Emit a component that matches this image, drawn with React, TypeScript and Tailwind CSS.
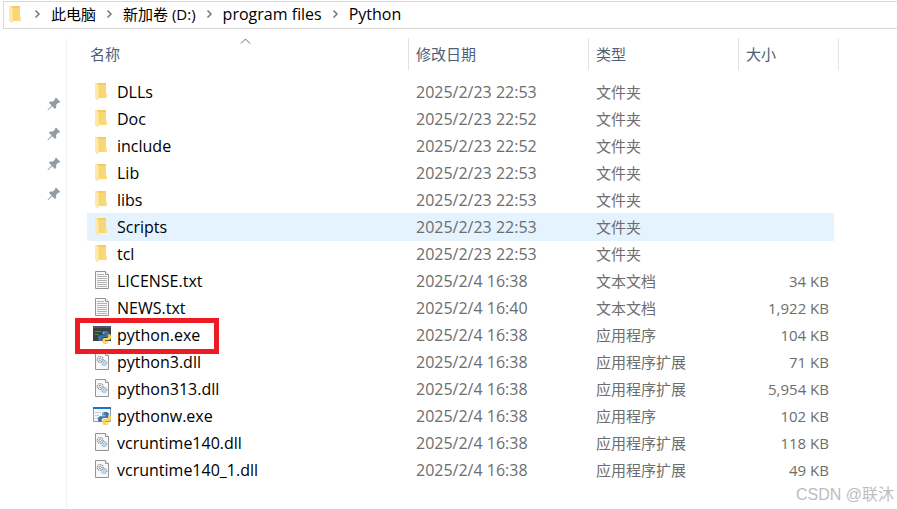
import React from "react";

type Kind = "folder" | "text" | "console" | "library" | "windowed";

interface FileRow {
  name: string;
  date: string;
  type: string;
  size: string;
  kind: Kind;
  selected?: boolean;
  framed?: boolean;
}

const rows: FileRow[] = [
  { name: "DLLs", date: "2025/2/23 22:53", type: "文件夹", size: "", kind: "folder" },
  { name: "Doc", date: "2025/2/23 22:52", type: "文件夹", size: "", kind: "folder" },
  { name: "include", date: "2025/2/23 22:52", type: "文件夹", size: "", kind: "folder" },
  { name: "Lib", date: "2025/2/23 22:53", type: "文件夹", size: "", kind: "folder" },
  { name: "libs", date: "2025/2/23 22:53", type: "文件夹", size: "", kind: "folder" },
  { name: "Scripts", date: "2025/2/23 22:53", type: "文件夹", size: "", kind: "folder", selected: true },
  { name: "tcl", date: "2025/2/23 22:53", type: "文件夹", size: "", kind: "folder" },
  { name: "LICENSE.txt", date: "2025/2/4 16:38", type: "文本文档", size: "34 KB", kind: "text" },
  { name: "NEWS.txt", date: "2025/2/4 16:40", type: "文本文档", size: "1,922 KB", kind: "text" },
  { name: "python.exe", date: "2025/2/4 16:38", type: "应用程序", size: "104 KB", kind: "console", framed: true },
  { name: "python3.dll", date: "2025/2/4 16:38", type: "应用程序扩展", size: "71 KB", kind: "library" },
  { name: "python313.dll", date: "2025/2/4 16:38", type: "应用程序扩展", size: "5,954 KB", kind: "library" },
  { name: "pythonw.exe", date: "2025/2/4 16:38", type: "应用程序", size: "102 KB", kind: "windowed" },
  { name: "vcruntime140.dll", date: "2025/2/4 16:38", type: "应用程序扩展", size: "118 KB", kind: "library" },
  { name: "vcruntime140_1.dll", date: "2025/2/4 16:38", type: "应用程序扩展", size: "49 KB", kind: "library" },
];

const path = [
  { label: "此电脑", text: "text-[15px]" },
  { label: "新加卷 (D:)", text: "text-[15px]" },
  { label: "program files", text: "text-base" },
  { label: "Python", text: "text-base" },
];

function FolderShape() {
  return (
    <>
      <path d="M3 1h9v11l1 1v3H4z" fill="#f8d775" />
      <path d="M3 1h9v2H3z" fill="#f3cc64" />
      <path d="M11 12h2v4h-2z" fill="#fbe08a" />
      <path d="M1 1h2l2 3v12l-2 2-2-2z" fill="#ffe9a6" />
      <path d="M5 4v12l-2 2" fill="none" stroke="#f6d57d" strokeWidth=".8" />
    </>
  );
}

function PageShape() {
  return (
    <>
      <path d="M1.5 1.5h10l3 3v14h-13z" fill="#f7f7f7" stroke="#949494" />
      <path d="M11.5 1.5v3h3" fill="#fff" stroke="#949494" />
    </>
  );
}

function PythonMark() {
  return (
    <g transform="translate(-1.6 -2) scale(1.15 1.1)">
      <path
        d="M12.8 7.3c-2.4 0-2.5 1-2.5 1.8v1.3h2.9v.7H8.7c-1.4 0-2.1 1-2.1 2.6s.7 2.7 1.9 2.7h1.2v-1.7c0-1.2 1-1.9 2-1.9h2.7c1 0 1.6-.7 1.6-1.6V9.1c0-1.2-1-1.8-3.2-1.8z"
        fill="#3a76ad"
      />
      <path
        d="M13.1 19.2c2.4 0 2.5-1 2.5-1.8v-1.3h-2.9v-.7h3.2c1.400 0 2.100-1 2.100-2.600s-.7-2.700-1.900-2.700h-.5v1.700c0 1.200-1 1.900-2 1.900h-1.500c-1 0-1.600.7-1.600 1.600v2.100c0 1.200 1 1.800 2.600 1.800z"
        fill="#fdd550"
      />
      <circle cx="11.6" cy="8.9" r=".6" fill="#fff" />
      <circle cx="14.2" cy="17.6" r=".6" fill="#fff" />
    </g>
  );
}

function FileIcon({ kind }: { kind: Kind }) {
  if (kind === "folder") {
    return (
      <svg viewBox="0 0 14 19" className="ml-[7px] h-[19px] w-[14px]" aria-hidden="true">
        <FolderShape />
      </svg>
    );
  }
  if (kind === "text") {
    return (
      <svg viewBox="0 1 16 20" className="ml-[7px] h-5 w-4" aria-hidden="true">
        <PageShape />
        <path
          d="M3 4.5h7M3 6.5h10M3 8.5h10M3 10.5h10M3 12.5h10M3 14.5h10M3 16.5h10"
          stroke="#b4b4b4"
          fill="none"
        />
      </svg>
    );
  }
  if (kind === "library") {
    return (
      <svg viewBox="0 1 16 20" className="ml-[7px] h-5 w-4" aria-hidden="true">
        <PageShape />
        <circle cx="6.2" cy="8.5" r="2.9" fill="#fff" stroke="#8a9095" strokeWidth="1.3" strokeDasharray="1.2 .7" />
        <circle cx="6.2" cy="8.5" r="1.2" fill="#fff" stroke="#858c91" strokeWidth=".8" />
        <circle cx="10.3" cy="12" r="2.4" fill="#e9f4fb" stroke="#7fa3bc" strokeWidth="1.2" strokeDasharray="1 .6" />
        <circle cx="10.3" cy="12" r=".9" fill="#fff" stroke="#80a8c4" strokeWidth=".7" />
      </svg>
    );
  }
  if (kind === "console") {
    return (
      <svg viewBox="0 0 20 20" className="ml-[5px] size-5" aria-hidden="true">
        <path d="M1 1h18v15H1z" fill="#3b4045" />
        <path d="M1 1h18v2H1z" fill="#46586a" />
        <path d="M3 6.5h6M3 9.5h4" stroke="#3f9656" fill="none" />
        <PythonMark />
      </svg>
    );
  }
  return (
    <svg viewBox="0 0 20 20" className="ml-[5px] size-5" aria-hidden="true">
      <path d="M1.5 1.5h17v14h-17z" fill="#f3f5f7" stroke="#8e9dab" />
      <path d="M1 1h18v2H1z" fill="#1976c1" />
      <path d="M3 6.5h6M3 9.5h4M3 12.5h3" stroke="#c7ccd1" fill="none" />
      <PythonMark />
    </svg>
  );
}

function Pin() {
  return (
    <svg viewBox="0 0 14 14" className="size-[14px]" aria-hidden="true">
      <path
        d="M9 .6 13.4 5l-1.500.8-.8-.1-2 2.200.2 2.700-1.300 1.300-2.800-2.700L1.300 13.100.5 13.300l.2-.9 3.900-3.900L1.900 5.700l1.300-1.300 2.700.2L8 2.600V1.800z"
        fill="#929ca4"
      />
    </svg>
  );
}

function Separator() {
  return (
    <svg viewBox="0 0 7 10" className="mx-[10px] h-[10px] w-[7px]" aria-hidden="true">
      <path d="M1.500 1.500 5 5 1.500 8.500" fill="none" stroke="#777" strokeWidth="1.500" />
    </svg>
  );
}

const headCell = "h-8 border-r border-[#e2e2e2] p-0 text-left align-middle font-normal";
const bodyCell = "h-[27px] whitespace-nowrap p-0 align-middle";

export default function App() {
  return (
    <div className="relative flex min-h-screen flex-col overflow-hidden bg-white font-['Open_Sans','Noto_Sans_CJK_SC',sans-serif] text-[15px] leading-5 text-[#6d6d6d]">
      <nav
        aria-label="地址"
        className="mt-px ml-[3px] flex h-7 shrink-0 items-center border-y border-l border-[#d9d9d9] pb-0.5 pl-1 text-black"
      >
        <svg viewBox="0 0 14 19" className="h-[19px] w-[14px]" aria-hidden="true">
          <FolderShape />
        </svg>
        <ol className="ml-0.5 flex items-center">
          {path.map((part) => (
            <li key={part.label} className="flex items-center">
              <Separator />
              <button type="button" className={`${part.text} leading-5 whitespace-nowrap`}>
                {part.label}
              </button>
            </li>
          ))}
        </ol>
      </nav>

      <div className="mt-[9px] flex grow">
        <aside className="w-[67px] shrink-0 border-r border-[#f2f2f2] pt-[59px]">
          <ul className="flex flex-col items-end gap-4 pr-[5px]">
            {[0, 1, 2, 3].map((item) => (
              <li key={item} className="h-[14px]">
                <Pin />
              </li>
            ))}
          </ul>
        </aside>

        <main className="mr-[58px] ml-5 grow">
          <table className="w-full table-fixed border-separate border-spacing-0">
            <colgroup>
              <col />
              <col className="w-[180px]" />
              <col className="w-[150px]" />
              <col className="w-[95px]" />
              <col className="w-[5px]" />
            </colgroup>
            <thead className="text-[#4c607a]">
              <tr>
                <th className={`${headCell} relative`}>
                  <button type="button" className="block w-full pl-[3px] text-left">
                    名称
                  </button>
                  <svg
                    viewBox="0 0 11 6"
                    className="absolute top-0 left-[153px] h-[6px] w-[11px]"
                    aria-hidden="true"
                  >
                    <path d="M1 5.5 5.5 1 10 5.5" fill="none" stroke="#6b6b6b" />
                  </svg>
                </th>
                <th className={headCell}>
                  <button type="button" className="block w-full pl-[7px] text-left">
                    修改日期
                  </button>
                </th>
                <th className={headCell}>
                  <button type="button" className="block w-full pl-[7px] text-left">
                    类型
                  </button>
                </th>
                <th colSpan={2} className={headCell}>
                  <button type="button" className="block w-full pl-[7px] text-left">
                    大小
                  </button>
                </th>
              </tr>
            </thead>
            <tbody className="before:block before:h-2 before:content-['']">
              {rows.map((row) => {
                const fill = row.selected ? "bg-[#e5f3ff] shadow-[0_1px_0_#e5f3ff]" : "";
                return (
                  <tr key={row.name}>
                    <td className={`${bodyCell} ${fill} relative text-base leading-5 text-black`}>
                      <div className="flex items-center">
                        <span className="w-[30px] shrink-0">
                          <FileIcon kind={row.kind} />
                        </span>
                        <span>{row.name}</span>
                      </div>
                      {row.framed && (
                        <span className="absolute -top-[3px] -left-3 z-10 h-9 w-36 border-5 border-[#ed1c24]" />
                      )}
                    </td>
                    <td className={`${bodyCell} ${fill} pl-[7px] text-base leading-5`}>{row.date}</td>
                    <td className={`${bodyCell} ${fill} pl-[7px]`}>{row.type}</td>
                    <td className={`${bodyCell} ${fill} pr-[5px] text-right`}>{row.size}</td>
                    <td className={bodyCell} />
                  </tr>
                );
              })}
            </tbody>
          </table>
        </main>
      </div>

      <p className="absolute right-[3px] bottom-1 font-['Liberation_Sans','Noto_Sans_CJK_SC',sans-serif] text-base leading-5 text-[#bdbdbd]">
        CSDN @联沐
      </p>
    </div>
  );
}
